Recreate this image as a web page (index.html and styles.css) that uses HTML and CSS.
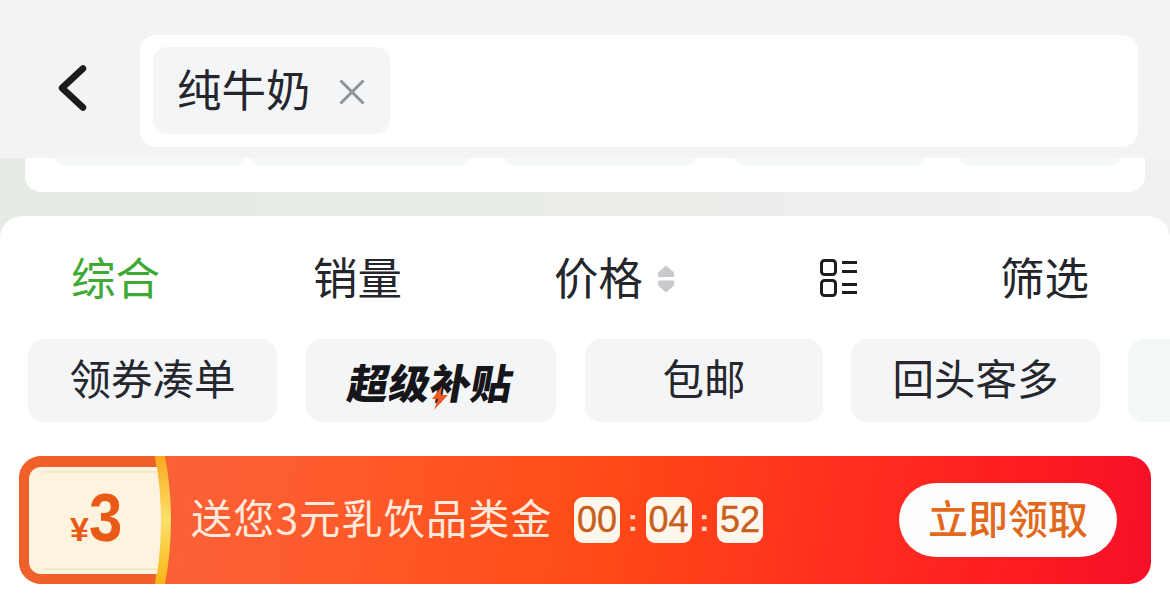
FILE: index.html
```html
<!DOCTYPE html>
<html lang="zh-CN">
<head>
<meta charset="utf-8">
<title>纯牛奶</title>
<link rel="stylesheet" href="styles.css">
</head>
<body>
<div class="page">
  <header class="header">
    <svg class="back" width="30" height="46" viewBox="0 0 30 46"><path d="M26 3.500 5 23 26 42.500" fill="none" stroke="#1b1b1d" stroke-width="6.500" stroke-linecap="round" stroke-linejoin="round"/></svg>
    <div class="search">
      <div class="tag">
        <span class="tag-text">纯牛奶</span>
        <svg class="tag-x" width="26" height="26" viewBox="0 0 26 26"><path d="M1.500 1.500 24.500 24.500M24.500 1.500 1.500 24.500" stroke="#8d9498" stroke-width="3" fill="none"/></svg>
      </div>
    </div>
  </header>
  <div class="band">
    <div class="card">
      <div class="card-edge">
        <i class="seg seg-a"></i><i class="seg seg-b"></i><i class="seg seg-c"></i><i class="seg seg-d"></i><i class="seg seg-e"></i>
      </div>
    </div>
  </div>
  <main class="sheet">
    <nav class="tabs">
      <span class="tab"><span class="tab-label tab-active">综合</span></span>
      <span class="tab"><span class="tab-label">销量</span></span>
      <span class="tab"><span class="tab-label">价格</span>
        <svg class="sort" width="18" height="28" viewBox="0 0 18 28"><path d="M9 .5 17 7.500 17 12 1 12 1 7.500Z" fill="#c8cace"/><path d="M1 15.500 17 15.500 17 20.500 9 27.500 1 20.500Z" fill="#c8cace"/></svg>
      </span>
      <span class="tab">
        <svg class="layout" width="38" height="38" viewBox="0 0 38 38" fill="none" stroke="#1c1d20" stroke-width="3"><rect x="1.500" y="1.500" width="14" height="14" rx="3"/><rect x="1.500" y="21.500" width="14" height="15" rx="3"/><path d="M22 3.500H37M22 12.500H37M22 25.500H37M22 33.500H37"/></svg>
      </span>
      <span class="tab"><span class="tab-label">筛选</span></span>
    </nav>
    <div class="chips">
      <span class="chip chip-a"><span class="chip-text">领券凑单</span></span>
      <span class="chip chip-b">
        <span class="logo"><span class="logo-text">超级补贴</span>
          <svg class="bolt" width="18" height="24" viewBox="0 0 18 24"><path d="M11 0 1 13h6L3 24 17 9h-7Z" fill="#ef5a24"/></svg>
        </span>
      </span>
      <span class="chip chip-c"><span class="chip-text">包邮</span></span>
      <span class="chip chip-d"><span class="chip-text">回头客多</span></span>
      <span class="chip chip-e"></span>
    </div>
    <section class="banner">
      <div class="coupon">
        <svg class="coupon-bg" width="152" height="128" viewBox="0 0 152 128">
          <defs>
            <linearGradient id="gold" x1="0" y1="0" x2="0" y2="1"><stop offset="0" stop-color="#f6a91f"/><stop offset=".5" stop-color="#fde06a"/><stop offset="1" stop-color="#f9b414"/></linearGradient>
          </defs>
          <path d="M22 0H146Q158 64 146 128H22A22 22 0 0 1 0 106V22A22 22 0 0 1 22 0Z" fill="#f0602a"/>
          <path d="M136 0H146Q158 64 146 128H136Q146 64 136 0Z" fill="url(#gold)"/>
          <path d="M22 11H138Q146 64 138 118H22A12 12 0 0 1 10 106V23A12 12 0 0 1 22 11Z" fill="#fdf3df"/>
          <path d="M24 16H138M24 113H138" stroke="#fce8c9" stroke-width="2"/>
        </svg>
        <div class="amount"><span class="yen">¥</span><span class="num">3</span></div>
      </div>
      <p class="promo">送您3元乳饮品类金</p>
      <div class="timer">
        <span class="time">00</span><span class="colon">:</span><span class="time">04</span><span class="colon">:</span><span class="time">52</span>
      </div>
      <button class="claim">立即领取</button>
    </section>
  </main>
</div>
</body>
</html>
```
FILE: styles.css
```css
* { box-sizing: border-box; }
html, body { margin: 0; padding: 0; }
body {
  width: 1170px;
  height: 616px;
  overflow: hidden;
  background: #fff;
  font-family: "Noto Sans CJK SC", "Liberation Sans", sans-serif;
}
.page { display: flex; flex-direction: column; height: 616px; overflow: hidden; }

.header {
  height: 158px;
  flex: none;
  background: #f3f3f3;
  display: flex;
  align-items: flex-start;
  padding: 35px 32px 0 57px;
}
.back { flex: none; margin-top: 30px; }
.search {
  margin-left: 53px;
  width: 998px;
  height: 112px;
  background: #fff;
  border-radius: 16px;
  padding: 12px 13px;
}
.tag {
  width: 237px;
  height: 87px;
  background: #f4f5f7;
  border-radius: 14px;
  display: flex;
  align-items: center;
  padding-left: 24px;
}
.tag-text { font-size: 44.500px; line-height: 60px; margin-bottom: 6px; color: #24262e; }
.tag-x { margin-left: 28px; margin-top: 2px; }

.band {
  height: 80px;
  flex: none;
  background: linear-gradient(90deg, #e4ece3 0%, #e8ece6 40%, #eeeeec 70%, #f1f1f1 100%);
  padding: 0 25px;
}
.card {
  height: 34px;
  background: #fff;
  border-radius: 0 0 16px 16px;
}
.card-edge { display: flex; height: 7px; padding-left: 30px; }
.seg { display: block; height: 7px; background: #f5f8f8; border-radius: 0 0 8px 8px; }
.seg-a { width: 190px; }
.seg-b { width: 220px; margin-left: 5px; }
.seg-c { width: 190px; margin-left: 35px; }
.seg-d { width: 190px; margin-left: 40px; }
.seg-e { width: 160px; margin-left: 35px; }

.sheet {
  flex: 1;
  margin-top: -22px;
  background: #fff;
  border-radius: 22px 22px 0 0;
  overflow: hidden;
}
.tabs {
  height: 123px;
  display: grid;
  grid-template-columns: 242px 241px 266px 180px 88px;
  padding-left: 71px;
  align-items: center;
}
.tab {
  height: 122px;
  color: #24262c;
  display: flex;
  align-items: center;
  white-space: nowrap;
}
.tab-label { font-size: 44.500px; line-height: 60px; margin-bottom: 4px; }
.tab-active { color: #3eaa35; }
.sort { margin-left: 14px; margin-top: 2px; }

.chips {
  display: flex;
  height: 83px;
  padding-left: 28px;
  gap: 29px;
}
.chip {
  flex: none;
  height: 83px;
  background: #f3f5f7;
  border-radius: 16px;
  color: #25272d;
  display: flex;
  align-items: center;
  justify-content: center;
  white-space: nowrap;
}
.chip-text { font-size: 41.500px; line-height: 60px; margin-bottom: 7px; }
.chip-a { width: 249px; }
.chip-b { width: 250px; }
.chip-c { width: 238px; }
.chip-d { width: 249px; margin-left: -1px; }
.chip-e { width: 80px; margin-left: -1px; background: #f3f7f8; }

.logo { position: relative; display: block; line-height: 50px; }
.logo-text {
  display: block;
  font-size: 41px;
  font-weight: 900;
  color: #16161a;
  transform: skewX(-10deg);
}
.bolt { position: absolute; left: 82px; top: 30px; }

.banner {
  margin: 34px 19px 0;
  height: 128px;
  width: 1132px;
  border-radius: 22px;
  background: linear-gradient(98deg, #f9623a 10%, #ff5a2a 30%, #ff4c16 50%, #ff2f1f 72%, #ff1c20 88%, #f50f28 100%);
  display: flex;
  align-items: center;
  overflow: hidden;
}
.coupon { position: relative; flex: none; width: 152px; height: 128px; }
.coupon-bg { position: absolute; left: 0; top: 0; }
.amount {
  position: relative;
  display: flex;
  align-items: baseline;
  padding: 23px 0 0 51px;
  color: #e95a17;
  font-family: "Liberation Sans", sans-serif;
  font-weight: 700;
  line-height: 76px;
}
.yen { font-size: 34px; margin-right: 0; }
.num { font-size: 68px; display: inline-block; transform: scaleX(.88); transform-origin: left center; }
.promo {
  margin: 0 0 8px 20px;
  width: 383px;
  flex: none;
  font-size: 41px;
  letter-spacing: 1.200px;
  color: #fdeadd;
  line-height: 60px;
  white-space: nowrap;
}
.timer { display: flex; align-items: center; flex: none; }
.time {
  width: 46px;
  height: 46px;
  background: #fff6ec;
  border-radius: 9px;
  color: #c8601c;
  font-family: "Liberation Sans", sans-serif;
  font-size: 36px;
  line-height: 46px;
  text-align: center;
  -webkit-text-stroke: .4px #c8601c;
}
.colon {
  width: 25.500px;
  text-align: center;
  color: #fbd9c4;
  font-family: "Liberation Sans", sans-serif;
  font-size: 32px;
  font-weight: 700;
  line-height: 40px;
}
.claim {
  margin-left: 136px;
  flex: none;
  width: 218px;
  height: 74px;
  border: 0;
  padding: 0 0 6px;
  border-radius: 37px;
  background: #fdfdfd;
  color: #e2691c;
  font-family: inherit;
  font-size: 40px;
  font-weight: 500;
  line-height: 60px;
}
```
